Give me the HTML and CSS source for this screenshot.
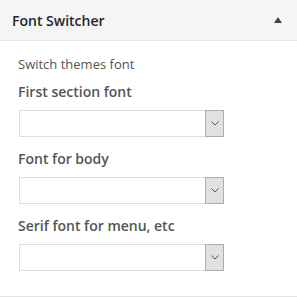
FILE: index.html
```html
<!DOCTYPE html>
<html lang="en">
<head>
    <meta charset="UTF-8">
    <title>Font Switcher</title>
    <link rel="stylesheet" href="styles.css">
</head>
<body>
    <div class="widget">
        <div class="widget-head">
            <h3>Font Switcher</h3>
            <span class="toggle"></span>
        </div>
        <div class="widget-body">
            <p class="desc">Switch themes font</p>
            <div class="field">
                <label>First section font</label>
                <div class="select"><span class="arrow"><svg width="8" height="5" viewBox="0 0 8 5"><path d="M0.5 0.5 L4 4 L7.5 0.5" fill="none" stroke="#555" stroke-width="1"/></svg></span></div>
            </div>
            <div class="field">
                <label>Font for body</label>
                <div class="select"><span class="arrow"><svg width="8" height="5" viewBox="0 0 8 5"><path d="M0.5 0.5 L4 4 L7.5 0.5" fill="none" stroke="#555" stroke-width="1"/></svg></span></div>
            </div>
            <div class="field">
                <label>Serif font for menu, etc</label>
                <div class="select"><span class="arrow"><svg width="8" height="5" viewBox="0 0 8 5"><path d="M0.5 0.5 L4 4 L7.5 0.5" fill="none" stroke="#555" stroke-width="1"/></svg></span></div>
            </div>
        </div>
    </div>
</body>
</html>
```
FILE: styles.css
```css
body {
    margin: 0;
    font-family: "Open Sans", Arial, sans-serif;
    background: #fff;
}
.widget {
    width: 297px;
    height: 297px;
    border-bottom: 1px solid #e5e5e5;
    box-sizing: border-box;
}
.widget-head {
    height: 40px;
    background: #f5f5f5;
    border-bottom: 1px solid #e5e5e5;
    display: flex;
    align-items: center;
    justify-content: space-between;
    padding: 0 15px 0 12px;
}
.widget-head h3 {
    margin: 0;
    font-size: 14px;
    font-weight: 600;
    color: #23282d;
}
.toggle {
    width: 0;
    height: 0;
    border-left: 4px solid transparent;
    border-right: 4px solid transparent;
    border-bottom: 6px solid #444;
    margin-top: -1px;
}
.widget-body {
    padding: 13px 18px 0 18px;
}
.desc {
    margin: 0;
    font-size: 13px;
    line-height: 20px;
    color: #555;
}
.field {
    margin-top: 8px;
}
.field + .field {
    margin-top: 12px;
}
.field label {
    display: block;
    font-size: 14px;
    font-weight: 600;
    line-height: 20px;
    color: #555;
}
.select {
    margin: 8px 0 0 1px;
    width: 205px;
    height: 27px;
    box-sizing: border-box;
    border: 1px solid #ddd;
    display: flex;
    justify-content: flex-end;
    background: #fff;
}
.arrow {
    width: 17px;
    margin: -1px -1px -1px 0;
    background: #e1e1e1;
    border: 1px solid #adadad;
    display: flex;
    align-items: center;
    justify-content: center;
}
```
